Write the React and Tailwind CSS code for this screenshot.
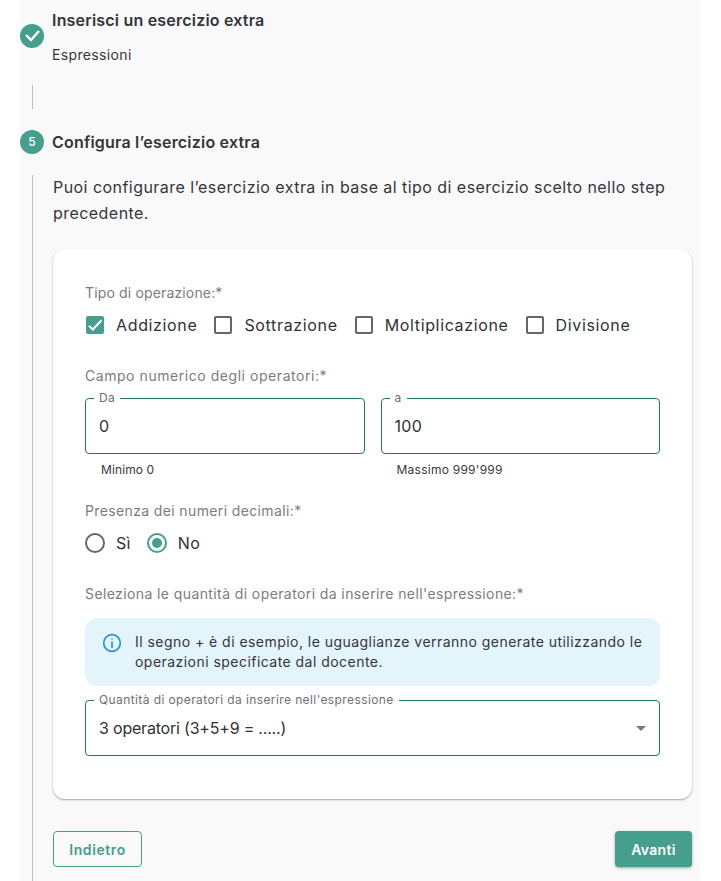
function Check({ checked, label }) {
  return (
    <div className="flex items-center h-[24px]">
      {checked ? (
        <span className="ml-px w-[18px] h-[18px] rounded-[2px] bg-[#469e8d] flex items-center justify-center shrink-0">
          <svg width="18" height="18" viewBox="0 0 18 18" fill="none"><path d="M3 9.7 6.8 13.5 15.5 4.2" stroke="#fff" strokeWidth="2" /></svg>
        </span>
      ) : (
        <span className="w-[18px] h-[18px] rounded-[2px] border-2 border-[#666666] shrink-0" />
      )}
      <span className="ml-[12px] text-[16px] text-[#2f3137] tracking-[0.65px]">{label}</span>
    </div>
  );
}
function Radio({ checked, label }) {
  return (
    <div className="flex items-center">
      <span className={`w-[20px] h-[20px] rounded-full border-2 flex items-center justify-center ${checked ? "border-[#469e8d]" : "border-[#666666]"}`}>
        {checked && <span className="w-[10px] h-[10px] rounded-full bg-[#469e8d]" />}
      </span>
      <span className="ml-[11px] text-[16px] text-[#2f3137] tracking-[0.32px]">{label}</span>
    </div>
  );
}
function Field({ legend, children }) {
  return (
    <div className="relative border border-[#1c7a69] rounded-[4px] h-[56px] pl-[13px] pr-[13px] flex items-center">
      <span className="absolute left-[8px] top-[-9px] px-[5px] bg-white text-[12px] leading-[16px] text-[#6f7079] tracking-[0.4px] whitespace-nowrap">{legend}</span>
      {children}
    </div>
  );
}
export default function App() {
  return (
    <div className="w-[721px] h-[881px] overflow-hidden bg-white font-['Inter','Liberation_Sans',sans-serif]">
      <div className="ml-[20px] w-[680px] h-[881px] bg-[#f9f9f9] flex flex-col">
        <div className="flex pt-[12px] h-[85px]">
          <div className="w-[24px] h-[24px] mt-[12px] rounded-full bg-[#469e8d] shrink-0">
            <svg width="24" height="24" viewBox="0 0 24 24" fill="none"><path d="M6 11 11 16 19 7" stroke="#fff" strokeWidth="2.4" /></svg>
          </div>
          <div className="ml-[8px]">
            <div className="-mt-px text-[16px] leading-[18px] font-semibold text-[#33353a] tracking-[0.2px]">Inserisci un esercizio extra</div>
            <div className="mt-[17px] text-[14px] leading-[18px] text-[#3b3540] tracking-[0.35px]">Espressioni</div>
          </div>
        </div>
        <div className="ml-[12px] w-px h-[24px] bg-[#bdbdbd]" />
        <div className="flex items-center mt-[21px] h-[24px]">
          <div className="w-[24px] h-[24px] rounded-full bg-[#469e8d] flex items-center justify-center text-white text-[12px] font-medium">5</div>
          <div className="ml-[8px] text-[16px] leading-[24px] font-semibold text-[#33353a] tracking-[0.2px]">Configura l’esercizio extra</div>
        </div>
        <div className="ml-[12px] mt-[21px] flex-1 border-l border-[#bdbdbd] pl-[20px] pr-[8px]">
          <p className="-mt-px text-[16px] leading-[26px] text-[#34363c] tracking-[0.45px]">Puoi configurare l’esercizio extra in base al tipo di esercizio scelto nello step precedente.</p>
          <div className="mt-[23px] h-[550px] bg-white rounded-[12px] shadow-[0_1px_2px_rgba(0,0,0,0.35)] px-[32px] pt-[35px]">
            <div className="text-[14px] leading-[18px] text-[#7c7c80] tracking-[0.15px]">Tipo di operazione:*</div>
            <div className="flex mt-[11px] gap-[17px]">
              <Check checked label="Addizione" />
              <Check label="Sottrazione" />
              <Check label="Moltiplicazione" />
              <Check label="Divisione" />
            </div>
            <div className="mt-[30px] text-[14px] leading-[18px] text-[#7c7c80] tracking-[0.55px]">Campo numerico degli operatori:*</div>
            <div className="flex gap-[16px] mt-[13px]">
              <div className="flex-1 min-w-0">
                <Field legend="Da"><span className="text-[16px] text-[#2f3137] tracking-[0.3px]">0</span></Field>
                <div className="mt-[8px] ml-[16px] text-[12px] leading-[16px] text-[#3b3540] tracking-[0.1px]">Minimo 0</div>
              </div>
              <div className="flex-1 min-w-0">
                <Field legend="a"><span className="text-[16px] text-[#2f3137] tracking-[0.3px]">100</span></Field>
                <div className="mt-[8px] ml-[16px] text-[12px] leading-[16px] text-[#3b3540] tracking-[0.25px]">Massimo 999'999</div>
              </div>
            </div>
            <div className="mt-[24px] text-[14px] leading-[18px] text-[#7c7c80] tracking-[0.37px]">Presenza dei numeri decimali:*</div>
            <div className="flex mt-[11px] gap-[16px] h-[24px]">
              <Radio label="Sì" />
              <Radio checked label="No" />
            </div>
            <div className="mt-[30px] text-[14px] leading-[18px] text-[#7c7c80] tracking-[0.4px]">Seleziona le quantità di operatori da inserire nell'espressione:*</div>
            <div className="mt-[15px] h-[68px] rounded-[12px] bg-[#e4f4fb] flex pl-[17px] pr-[12px] pt-[14px]">
              <svg className="shrink-0 mt-px" width="20" height="20" viewBox="0 0 24 24" fill="none" stroke="#2196d9" strokeWidth="2" strokeLinecap="round"><circle cx="12" cy="12" r="10" /><path d="M12 11v6" /><path d="M12 7.2v.1" /></svg>
              <p className="ml-[13px] text-[14px] leading-[20px] text-[#34363c] tracking-[0.46px]">Il segno + è di esempio, le uguaglianze verranno generate utilizzando le operazioni specificate dal docente.</p>
            </div>
            <div className="mt-[14px]">
              <Field legend="Quantità di operatori da inserire nell'espressione">
                <div className="flex flex-1 items-center justify-between">
                  <span className="text-[16px] text-[#2f3137] tracking-[-0.2px]">3 operatori (3+5+9 = .....)</span>
                  <span className="w-0 h-0 border-l-[5px] border-r-[5px] border-t-[5px] border-l-transparent border-r-transparent border-t-[#7a7a7a]" />
                </div>
              </Field>
            </div>
          </div>
          <div className="flex justify-between items-start mt-[32px]">
            <button className="w-[89px] h-[36px] rounded-[4px] border border-[#469e8d] text-[#469e8d] text-[14px] font-semibold tracking-[0.6px]">Indietro</button>
            <button className="w-[77px] h-[36px] rounded-[4px] bg-[#469e8d] text-white text-[14px] font-semibold tracking-[0.3px] shadow-[0_1px_3px_rgba(0,0,0,0.35)]">Avanti</button>
          </div>
        </div>
      </div>
    </div>
  );
}
